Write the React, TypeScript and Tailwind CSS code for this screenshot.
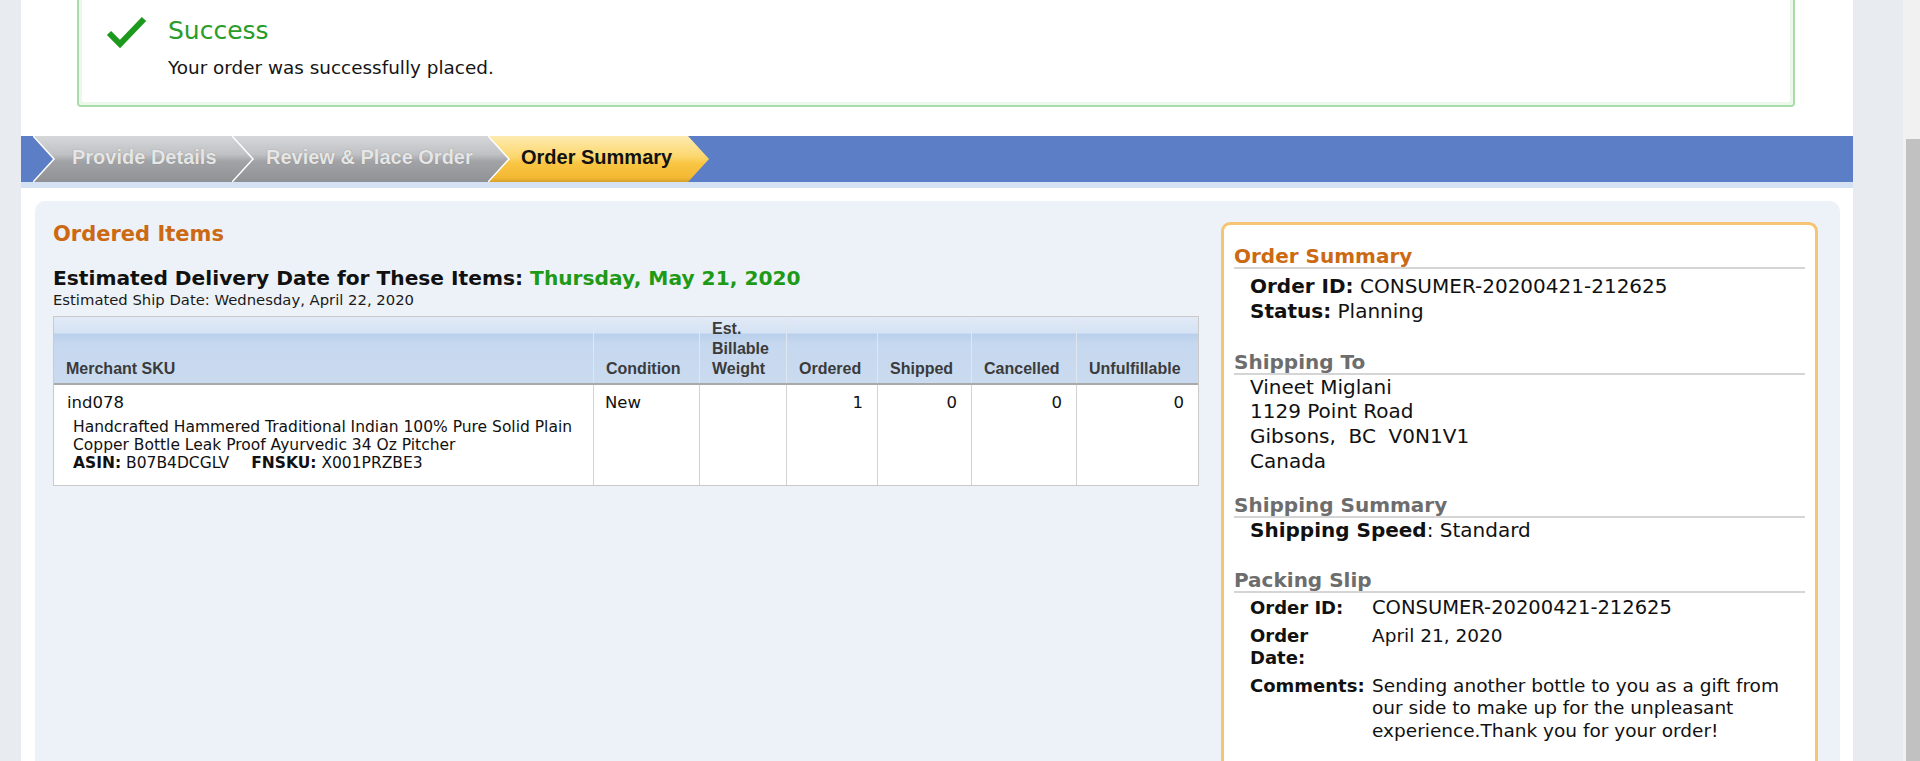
import React, {ReactNode} from 'react';
import clsx from 'clsx';

const dv = "font-['DejaVu_Sans','Verdana',sans-serif]";
const lib = "font-['Liberation_Sans',Arial,sans-serif]";

export default function App() {
  return (
    <div className="flex h-[761px] w-[1920px] overflow-hidden bg-[#e8ecf0]">
      <div className="w-[21px] shrink-0" />
      <div className="flex w-[1832px] shrink-0 flex-col bg-white">
        <SuccessBox />
        <StepBar />
        <main className="ml-[14px] mr-[13px] mt-[13px] flex flex-auto items-start gap-[22px] rounded-t-[10px] bg-[#edf2f8] pl-[18px] pr-[22px] pt-[20px]">
          <OrderedItems />
          <SummaryBox />
        </main>
      </div>
      <div className="w-[50px] shrink-0" />
      <div className="flex w-[17px] shrink-0 flex-col bg-[#f1f1f1]">
        <div className="h-[139px]" />
        <div className="ml-[3px] flex-auto bg-[#c1c1c1]" />
      </div>
    </div>
  );
}

function SuccessBox() {
  return (
    <div className="-mt-[10px] ml-[56px] mr-[58px] flex rounded-[4px] border-2 border-[#a9dca9] bg-white pb-[26px] pl-[27px] pt-[24px] shadow-[inset_0_0_0_3px_#ecf8ec]">
      <svg width="42" height="34" viewBox="0 0 42 34" className="-mt-[1px] shrink-0">
        <polyline
          points="3,18 14,29 38,4"
          fill="none"
          stroke="#1d9a1d"
          strokeWidth="6"
        />
      </svg>
      <div className={clsx('ml-[20px]', dv)}>
        <div className="text-[25px] leading-[30px] text-[#2a9c2a]">Success</div>
        <div className="mt-[10.5px] text-[18.4px] leading-[22px] text-[#151515]">
          Your order was successfully placed.
        </div>
      </div>
    </div>
  );
}

function StepBar() {
  return (
    <div className="mt-[29px]">
      <div className="flex h-[46px] bg-[#5b7ec6] pl-[12px]">
        <Step id="s1" label="Provide Details" w={220} className="w-[220px] pl-[39px]" />
        <Step id="s2" label="Review & Place Order" w={277} className="-ml-[21px] w-[277px] pl-[34px]" />
        <Step id="s3" label="Order Summary" w={221} className="-ml-[21px] w-[221px] pl-[33px]" active />
      </div>
      <div className="h-[6px] bg-[#d5e2f3]" />
    </div>
  );
}

interface StepProps {
  id: string;
  label: string;
  w: number;
  className: string;
  active?: boolean;
}
function Step({id, label, w, className, active}: StepProps) {
  const d = 21;
  return (
    <div className={clsx('relative h-[46px] shrink-0', className)}>
      <svg width={w} height="46" className="absolute left-0 top-0">
        <defs>
          <linearGradient id={id} x1="0" y1="0" x2="0" y2="1">
            {active ? (
              <>
                <stop offset="0" stopColor="#feebb0" />
                <stop offset="0.45" stopColor="#fcd76d" />
                <stop offset="0.6" stopColor="#f9c542" />
                <stop offset="0.9" stopColor="#f3b934" />
                <stop offset="1" stopColor="#d9a02a" />
              </>
            ) : (
              <>
                <stop offset="0" stopColor="#d6d7d9" />
                <stop offset="0.4" stopColor="#c0c1c4" />
                <stop offset="0.55" stopColor="#a2a3a6" />
                <stop offset="1" stopColor="#909194" />
              </>
            )}
          </linearGradient>
        </defs>
        <polygon
          points={`0,0 ${w - d},0 ${w},23 ${w - d},46 0,46 ${d},23`}
          fill={`url(#${id})`}
        />
        <polyline
          points={`0,0 ${d},23 0,46`}
          fill="none"
          stroke="#ffffff"
          strokeWidth="1.5"
        />
      </svg>
      <span
        className={clsx(
          'relative block whitespace-nowrap text-[20px] font-bold leading-[42px]',
          lib,
          active
            ? 'text-[#111111]'
            : 'text-[#e6e6e6] [text-shadow:0_0_1px_rgba(80,80,80,0.5)]',
        )}
      >
        {label}
      </span>
    </div>
  );
}

function OrderedItems() {
  return (
    <section className={clsx('w-[1146px] shrink-0', dv)}>
      <h2 className="text-[21px] font-bold leading-[26px] text-[#cc6a14]">
        Ordered Items
      </h2>
      <div className="mt-[19px] text-[20.2px] font-bold leading-[24px] text-[#111]">
        Estimated Delivery Date for These Items:{' '}
        <span className="text-[#1f9a17]">Thursday, May 21, 2020</span>
      </div>
      <div className="mt-[1px] text-[14.8px] leading-[18px] text-[#1a1a1a]">
        Estimated Ship Date: Wednesday, April 22, 2020
      </div>
      <ItemsTable />
    </section>
  );
}

const cols = 'grid grid-cols-[539px_106px_87px_91px_94px_105px_122px]';

function ItemsTable() {
  const headers = [
    'Merchant SKU',
    'Condition',
    'Est. Billable Weight',
    'Ordered',
    'Shipped',
    'Cancelled',
    'Unfulfillable',
  ];
  return (
    <div className="mt-[7px] border border-[#cacaca] bg-white">
      <div
        className={clsx(
          cols,
          'h-[68px] border-b-2 border-[#a9a9a9] bg-[linear-gradient(to_bottom,#e1eaf6_0%,#d6e3f4_24%,#b9cfeb_26%,#c6d8ef_40%,#cadbf0_100%)]',
        )}
      >
        {headers.map((h, i) => (
          <div
            key={h}
            className={clsx(
              'flex items-end pb-[4px] pl-[12px] text-[16px] font-bold leading-[20px] text-[#3b3b3b]',
              lib,
              i > 0 && 'border-l border-[#dfe6ef]',
            )}
          >
            {i === 2 ? (
              <span>
                Est.
                <br />
                Billable
                <br />
                Weight
              </span>
            ) : (
              h
            )}
          </div>
        ))}
      </div>
      <div className={clsx(cols, 'h-[100px] text-[16.5px] leading-[20px] text-[#111]')}>
        <div className="pl-[13px] pt-[8px]">
          <div>ind078</div>
          <div className="mt-[5.5px] pl-[6px] text-[15.5px] leading-[18px]">
            Handcrafted Hammered Traditional Indian 100% Pure Solid Plain
            Copper Bottle Leak Proof Ayurvedic 34 Oz Pitcher
            <div>
              <b>ASIN:</b> B07B4DCGLV
              <b className="ml-[22px]">FNSKU:</b> X001PRZBE3
            </div>
          </div>
        </div>
        <Cell className="pl-[11px]">New</Cell>
        <Cell />
        <Cell className="pr-[14px] text-right">1</Cell>
        <Cell className="pr-[14px] text-right">0</Cell>
        <Cell className="pr-[14px] text-right">0</Cell>
        <Cell className="pr-[14px] text-right">0</Cell>
      </div>
    </div>
  );
}

function Cell({children, className}: {children?: ReactNode; className?: string}) {
  return (
    <div className={clsx('border-l border-[#d2d2d2] pt-[8px]', className)}>
      {children}
    </div>
  );
}

function SectionTitle({children, orange}: {children: ReactNode; orange?: boolean}) {
  return (
    <h3
      className={clsx(
        'border-b-2 border-[#d5d5d5] text-[20px] font-bold leading-[22px]',
        orange ? 'text-[#cc6a14]' : 'text-[#6d6d6d]',
      )}
    >
      {children}
    </h3>
  );
}

function SummaryBox() {
  return (
    <aside
      className={clsx(
        'mt-[1px] h-[600px] w-[597px] shrink-0 rounded-[9px] border-[3px] border-[#f7c476] bg-white px-[10px] pt-[20px] text-[#111]',
        dv,
      )}
    >
      <SectionTitle orange>Order Summary</SectionTitle>
      <div className="mt-[5.5px] pl-[16px] text-[20px] leading-[25px]">
        <div>
          <b>Order ID:</b> CONSUMER-20200421-212625
        </div>
        <div>
          <b>Status:</b> Planning
        </div>
      </div>

      <div className="mt-[26.5px]">
        <SectionTitle>Shipping To</SectionTitle>
      </div>
      <div className="whitespace-pre pl-[16px] text-[20px] leading-[24.7px]">
        <div>Vineet Miglani</div>
        <div>1129 Point Road</div>
        <div>Gibsons,  BC  V0N1V1</div>
        <div>Canada</div>
      </div>

      <div className="mt-[21px]">
        <SectionTitle>Shipping Summary</SectionTitle>
      </div>
      <div className="pl-[16px] text-[20px] leading-[25px]">
        <b>Shipping Speed</b>: Standard
      </div>

      <div className="mt-[26px]">
        <SectionTitle>Packing Slip</SectionTitle>
      </div>
      <div className="mt-[4px] grid grid-cols-[122px_415px] gap-y-[5px] pl-[16px] text-[18.5px] leading-[22.5px]">
        <b className="pr-[6px] text-[18px]">Order ID:</b>
        <div className="text-[19.5px]">CONSUMER-20200421-212625</div>
        <b className="pr-[6px] text-[18px]">Order Date:</b>
        <div>April 21, 2020</div>
        <b className="pr-[6px] text-[18px]">Comments:</b>
        <div>
          Sending another bottle to you as a gift from our side to make up for
          the unpleasant experience.Thank you for your order!
        </div>
      </div>
    </aside>
  );
}
